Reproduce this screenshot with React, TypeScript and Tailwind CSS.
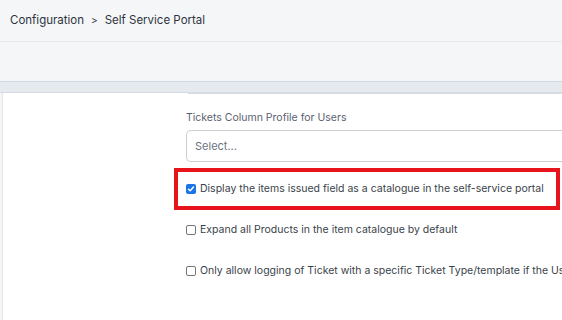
import React from "react";

function Check({ checked }: { checked: boolean }) {
  if (checked) {
    return (
      <span className="flex h-[10px] w-[10px] shrink-0 items-center justify-center rounded-[2px] bg-[#1a73e8]">
        <svg width="8" height="8" viewBox="0 0 8 8">
          <path d="M1.5 4.2 L3.2 5.8 L6.5 2" fill="none" stroke="#fff" strokeWidth="1.5" strokeLinecap="round" strokeLinejoin="round" />
        </svg>
      </span>
    );
  }
  return <span className="h-[10px] w-[10px] shrink-0 rounded-[2px] border border-[#767676] bg-white" />;
}

export default function App() {
  return (
    <div className="flex h-[320px] w-[562px] flex-col overflow-hidden bg-[#f5f6f8] text-[#3a3f4a]" style={{ fontFamily: "Inter, 'Noto Sans', sans-serif" }}>
      <div className="flex h-[42px] shrink-0 items-center border-b border-[#e6e8ec] px-[10px] text-[11.5px] text-[#2f3440]">
        <span>Configuration</span>
        <span className="mx-[7px] text-[10px]">&gt;</span>
        <span>Self Service Portal</span>
      </div>
      <div className="h-[40px] shrink-0 border-b border-[#cfd7e0]" />
      <div className="h-[11px] shrink-0 border-b border-[#d5dbe2] bg-[#e6e9ee]" />
      <div className="flex min-h-0 flex-1 pl-[2px]">
        <div className="w-[184px] shrink-0 border-l border-[#e2e6ea] bg-white" />
        <div className="flex min-w-0 flex-1 flex-col bg-white">
          <div className="ml-[2px] h-px bg-[#d9dcdf]" />
          <div className="mt-[17px] text-[10.5px] leading-[14px] text-[#5a6270]">Tickets Column Profile for Users</div>
          <div className="mt-[5px] flex h-[32px] shrink-0 items-center rounded-l-[5px] border border-r-0 border-[#cfcfcf] pl-[8px] text-[11px] text-[#6b7280]">Select...</div>
          <div className="ml-[-12px] mt-[6px] flex h-[42px] w-[386px] shrink-0 items-center gap-[4px] border-[4px] border-[#e8141c] pl-[8px] text-[10.5px] text-[#3a3f4a]">
            <Check checked />
            <span className="whitespace-nowrap">Display the items issued field as a catalogue in the self-service portal</span>
          </div>
          <div className="mt-[13px] flex h-[14px] shrink-0 items-center gap-[4px] whitespace-nowrap text-[10.5px]">
            <Check checked={false} />
            <span>Expand all Products in the item catalogue by default</span>
          </div>
          <div className="mt-[27px] flex h-[14px] shrink-0 items-center gap-[4px] whitespace-nowrap text-[10.5px]">
            <Check checked={false} />
            <span>Only allow logging of Ticket with a specific Ticket Type/template if the Us</span>
          </div>
        </div>
      </div>
    </div>
  );
}
